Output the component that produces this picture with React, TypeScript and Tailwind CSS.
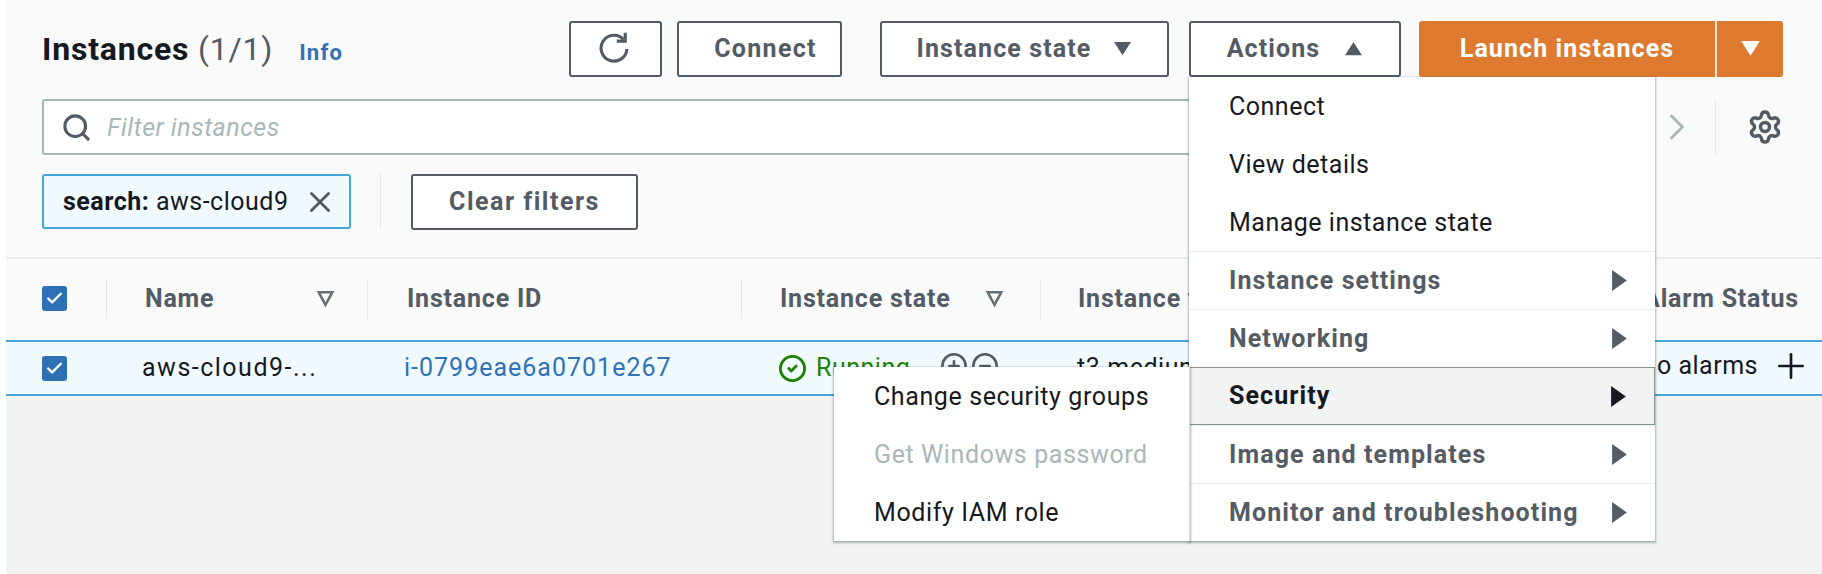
import React from 'react';
import { Search, X, Settings, CircleCheck, CirclePlus, CircleMinus, Plus, ChevronRight, Check } from 'lucide-react';

const Tri: React.FC<{ dir: 'up' | 'down' | 'right'; className?: string }> = ({ dir, className }) => {
  const pts = dir === 'up' ? '1,15 17,15 9,1' : dir === 'down' ? '1,1 17,1 9,15' : '2,0 16,9 2,18';
  return (
    <svg viewBox="0 0 18 18" preserveAspectRatio="none" className={className} fill="currentColor">
      <polygon points={pts} />
    </svg>
  );
};

const FilterTri: React.FC = () => (
  <svg viewBox="0 0 18 18" className="w-[19px] h-[19px] text-[#687078]" fill="none" stroke="currentColor" strokeWidth="2.4">
    <polygon points="2.5,3 15.5,3 9,15" />
  </svg>
);

const Box: React.FC = () => (
  <div className="w-[25px] h-[25px] rounded-[3px] bg-[#2f6fb6] flex items-center justify-center text-white">
    <Check className="w-[19px] h-[19px]" strokeWidth={3} />
  </div>
);

const Btn: React.FC<{ className?: string; children: React.ReactNode }> = ({ className, children }) => (
  <div className={`h-[56px] border-2 border-[#545b64] rounded-[3px] bg-white flex items-center justify-center font-bold text-[#545b64] text-[25px] tracking-[1.1px] ${className}`}>
    {children}
  </div>
);

const Sep: React.FC = () => <div className="w-px h-[40px] bg-[#e4e6e7]" />;

const SubItem: React.FC<{ label: string; active?: boolean }> = ({ label, active }) => (
  <div
    className={
      active
        ? 'relative h-[58px] pl-[39px] pr-[26px] flex items-center justify-between font-bold text-[#16191f] tracking-[1.1px] bg-[#f2f3f3] border border-[#879596]'
        : 'h-[58px] pl-[40px] pr-[26px] flex items-center justify-between font-bold text-[#545b64] tracking-[1.1px] border-t border-[#eaeded]'
    }
  >
    <span>{label}</span>
    <Tri dir="right" className="w-[19px] h-[21px]" />
    {active && (
      <div className="absolute right-full top-[-1px] w-[356px] h-[174px] bg-white font-normal tracking-[0.6px] text-[#16191f] border-r border-[#d5dbdb] shadow-[0_1px_2px_1px_rgba(0,28,36,0.3)]">
        <div className="h-[58px] pl-[40px] pt-[2px] flex items-center">Change security groups</div>
        <div className="h-[58px] pl-[40px] pt-[2px] flex items-center text-[#aab7b8]">Get Windows password</div>
        <div className="h-[58px] pl-[40px] pt-[2px] flex items-center">Modify IAM role</div>
      </div>
    )}
  </div>
);

export default function App() {
  return (
    <div className="h-[574px] overflow-hidden bg-white pl-[6px] text-[25px] font-['Roboto',sans-serif] tracking-[0.5px]">
      <div className="h-full bg-[#f2f3f3]">
        {/* Header area */}
        <div className="h-[259px] bg-[#fafafa] border-b-2 border-[#eaeded] pl-[36px] pr-[39px] pt-[21px]">
          <div className="flex items-center h-[56px]">
            <h1 className="text-[32px] font-bold text-[#16191f] tracking-[0.8px]">
              Instances <span className="font-normal text-[#545b64]">(1/1)</span>
            </h1>
            <a className="ml-[26px] mt-[6px] text-[22px] font-bold tracking-[1.2px] text-[#2f72b8]">Info</a>
            <Btn className="ml-auto w-[93px] pr-[3px]">
              <svg viewBox="0 0 32 32" className="w-[36px] h-[36px]" fill="none" stroke="currentColor" strokeWidth="2.8">
                <path d="M24.5 7.5 A11.5 11.5 0 1 0 27.5 16" />
                <path d="M26 1.5 V9 H18.5" />
              </svg>
            </Btn>
            <Btn className="ml-[15px] w-[165px] pl-[12px] tracking-[1.3px]">Connect</Btn>
            <Btn className="ml-[38px] w-[289px] gap-[22px]">
              Instance state
              <Tri dir="down" className="w-[19px] h-[17px]" />
            </Btn>
            <div className="relative ml-[20px] w-[212px]">
              <Btn className="gap-[24px]">
                Actions
                <Tri dir="up" className="w-[19px] h-[17px]" />
              </Btn>
              {/* Actions menu */}
              <div className="absolute z-10 left-0 top-full w-[466px] bg-white shadow-[0_1px_2px_1px_rgba(0,28,36,0.3)] text-[#16191f]">
                <div className="h-[58px] pl-[40px] pt-[2px] flex items-center">Connect</div>
                <div className="h-[58px] pl-[40px] pt-[2px] flex items-center">View details</div>
                <div className="h-[58px] pl-[40px] pt-[2px] flex items-center">Manage instance state</div>
                <SubItem label="Instance settings" />
                <SubItem label="Networking" />
                <SubItem label="Security" active />
                <SubItem label="Image and templates" />
                <SubItem label="Monitor and troubleshooting" />
              </div>
            </div>
            <div className="ml-[18px] w-[364px] h-[56px] flex bg-[#dd7a30] rounded-[3px] font-bold tracking-[1.1px] text-white">
              <div className="flex-1 flex items-center justify-center">Launch instances</div>
              <div className="w-[68px] border-l-2 border-white/80 flex items-center justify-center">
                <Tri dir="down" className="w-[21px] h-[19px]" />
              </div>
            </div>
          </div>

          <div className="flex items-center h-[56px] mt-[22px]">
            <div className="w-[1600px] h-[56px] border-2 border-[#aab7b8] rounded-[3px] bg-white flex items-center pl-[17px] gap-[15px]">
              <Search className="w-[31px] h-[31px] text-[#545b64]" strokeWidth={2.4} />
              <span className="italic text-[#aab7b8] pt-[2px]">Filter instances</span>
            </div>
            <ChevronRight className="ml-[14px] w-[44px] h-[48px] text-[#aab7b8]" strokeWidth={1.6} />
            <div className="ml-[16px] w-px h-[54px] bg-[#e4e6e7]" />
            <Settings className="ml-[31px] w-[36px] h-[36px] text-[#545b64]" strokeWidth={2.3} />
          </div>

          <div className="flex items-center h-[55px] mt-[19px]">
            <div className="w-[309px] h-[55px] border-2 border-[#44a7d6] rounded-[3px] bg-[#f1faff] flex items-center pl-[19px] text-[#16191f] whitespace-nowrap">
              <b className="font-bold">search:</b>&nbsp;aws-cloud9
              <X className="ml-[15px] w-[34px] h-[34px] text-[#545b64]" strokeWidth={2} />
            </div>
            <div className="ml-[29px] w-px h-[55px] bg-[#e4e6e7]" />
            <Btn className="ml-[30px] w-[227px] h-[55px] tracking-[1.5px]">Clear filters</Btn>
          </div>
        </div>

        {/* Table header */}
        <div className="h-[81px] pb-[2px] bg-[#fafafa] flex items-center font-bold text-[#545b64] tracking-[0.8px] pl-[36px]">
          <div className="w-[64px]"><Box /></div>
          <Sep />
          <div className="w-[260px] pl-[38px] pr-[32px] flex items-center justify-between">Name<FilterTri /></div>
          <Sep />
          <div className="w-[373px] pl-[39px]">Instance ID</div>
          <Sep />
          <div className="w-[298px] pl-[38px] pr-[36px] flex items-center justify-between">Instance state<FilterTri /></div>
          <Sep />
          <div className="pl-[37px] whitespace-nowrap">Instance type</div>
          <div className="ml-auto pr-[23px] whitespace-nowrap">Alarm Status</div>
        </div>

        {/* Selected row */}
        <div className="h-[56px] bg-[#f1faff] border-y-2 border-[#44a7d6] flex items-center text-[#16191f] pl-[36px] whitespace-nowrap">
          <div className="w-[100px]"><Box /></div>
          <div className="w-[262px] tracking-[1.5px]">aws-cloud9-...</div>
          <a className="w-[374px] text-[#2f72b8] tracking-[1px]">i-0799eae6a0701e267</a>
          <div className="w-[299px] flex items-center text-[#1d8102]">
            <CircleCheck className="w-[29px] h-[29px]" strokeWidth={2.4} />
            <span className="ml-[9px]">Running</span>
            <CirclePlus className="ml-[30px] mt-[-4px] w-[28px] h-[28px] text-[#545b64]" strokeWidth={2.2} />
            <CircleMinus className="ml-[3px] mt-[-4px] w-[28px] h-[28px] text-[#545b64]" strokeWidth={2.2} />
          </div>
          <div>t3.medium</div>
          <div className="ml-auto flex items-center pr-[11px] mb-[4px]">
            No alarms
            <Plus className="ml-[13px] w-[40px] h-[40px]" strokeWidth={1.6} />
          </div>
        </div>
      </div>
    </div>
  );
}
